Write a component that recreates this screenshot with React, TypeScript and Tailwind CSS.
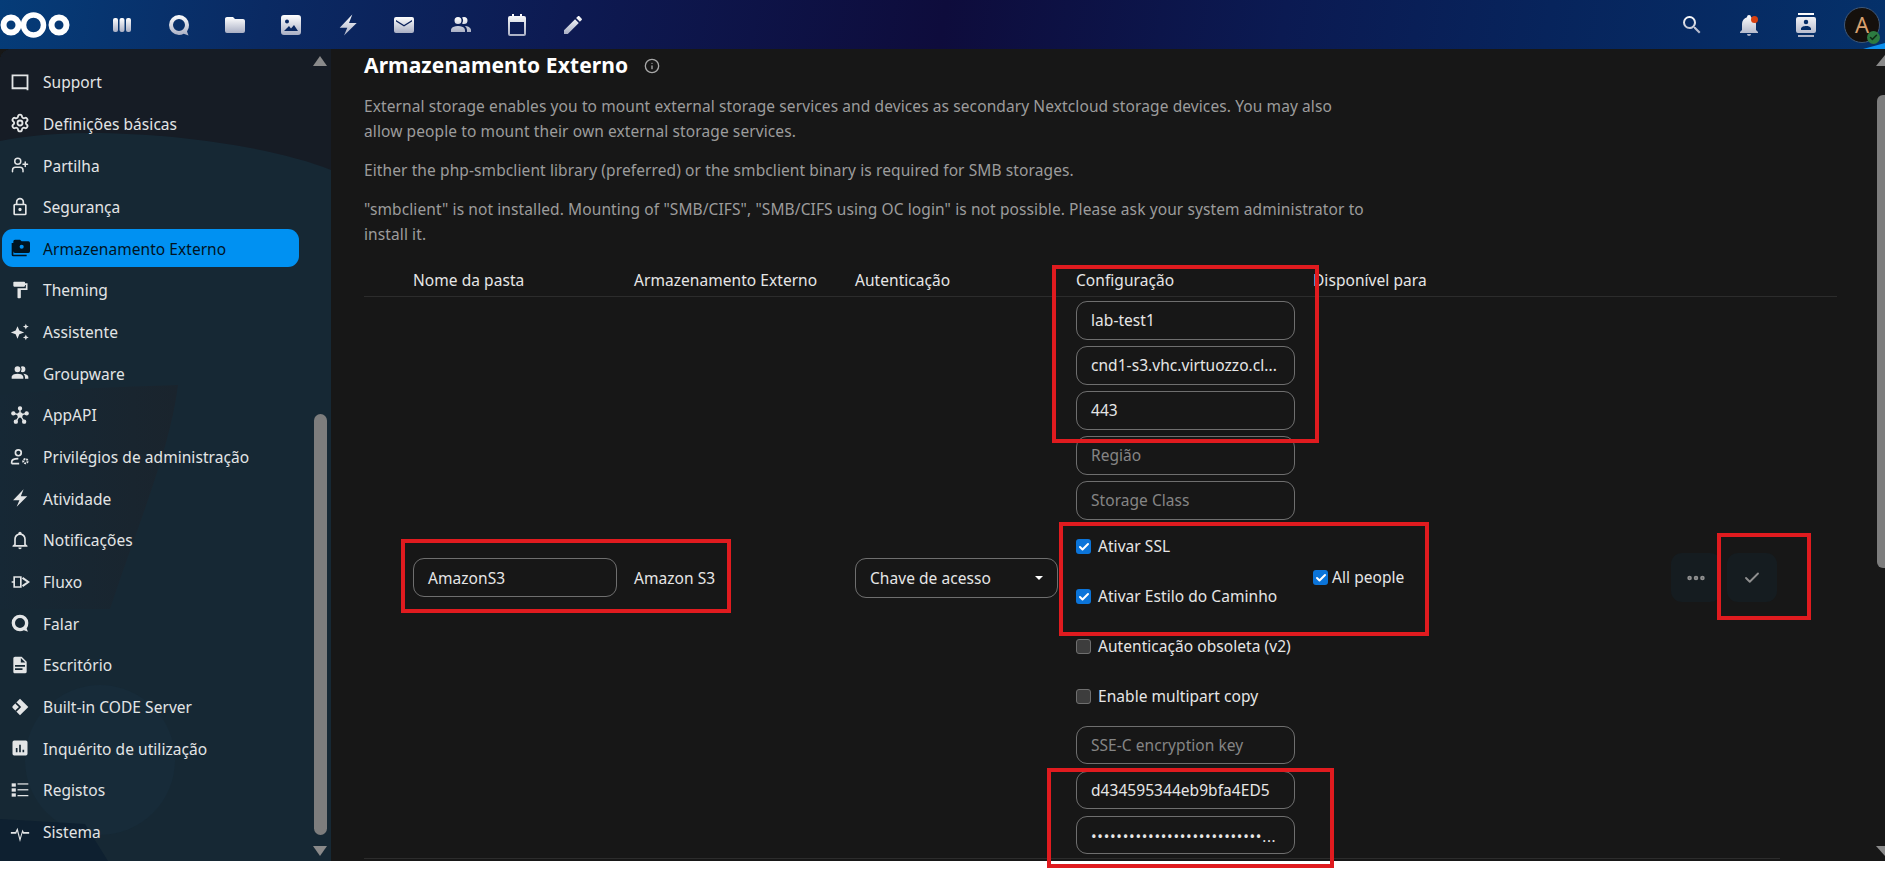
import { Ellipsis, Check, Info, Settings, UserPlus } from 'lucide-react'
import type { ReactNode } from 'react'

const font = 'font-["Noto_Sans","Open_Sans",sans-serif]'

function Mdi({ d, className = 'w-5 h-5', fill = 'currentColor' }: { d: string; className?: string; fill?: string }) {
  return (
    <svg viewBox="0 0 24 24" className={className} fill={fill}>
      <path d={d} />
    </svg>
  )
}

const paths = {
  folder: 'M10,4H4C2.89,4 2,4.89 2,6V18A2,2 0 0,0 4,20H20A2,2 0 0,0 22,18V8C22,6.89 21.1,6 20,6H12L10,4Z',
  bolt: 'M16.3 1.5L3.7 14.7H11.3L8 22.5L20.7 10H13Z',
  people:
    'M16 17V19H2V17S2 13 9 13 16 17 16 17M12.5 7.5A3.5 3.5 0 1 0 9 11A3.5 3.5 0 0 0 12.5 7.5M15.94 13A5.32 5.32 0 0 1 18 17V19H22V17S22 13.37 15.94 13M15 4A3.39 3.39 0 0 0 13.07 4.59A5 5 0 0 1 13.07 10.41A3.39 3.39 0 0 0 15 11A3.5 3.5 0 0 0 15 4Z',
  pencil:
    'M20.71,7.04C21.1,6.65 21.1,6 20.71,5.63L18.37,3.29C18,2.9 17.35,2.9 16.96,3.29L15.12,5.12L18.87,8.87M3,17.25V21H6.75L17.81,9.93L14.06,6.18L3,17.25Z',
  search:
    'M9.5,3A6.5,6.5 0 0,1 16,9.5C16,11.11 15.41,12.59 14.44,13.73L14.71,14H15.5L20.5,19L19,20.5L14,15.5V14.71L13.73,14.44C12.59,15.41 11.11,16 9.5,16A6.5,6.5 0 0,1 3,9.5A6.5,6.5 0 0,1 9.5,3M9.5,5C7,5 5,7 5,9.5C5,12 7,14 9.5,14C12,14 14,12 14,9.5C14,7 12,5 9.5,5Z',
  bell: 'M21,19V20H3V19L5,17V11C5,7.9 7.03,5.17 10,4.29C10,4.19 10,4.1 10,4A2,2 0 0,1 12,2A2,2 0 0,1 14,4C14,4.1 14,4.19 14,4.29C16.97,5.17 19,7.9 19,11V17L21,19M14,21A2,2 0 0,1 12,23A2,2 0 0,1 10,21',
  card: 'M20,0H4V2H20V0M4,24H20V22H4V24M20,4H4A2,2 0 0,0 2,6V18A2,2 0 0,0 4,20H20A2,2 0 0,0 22,18V6A2,2 0 0,0 20,4M12,6.75A2.25,2.25 0 0,1 14.25,9A2.25,2.25 0 0,1 12,11.25A2.25,2.25 0 0,1 9.75,9A2.25,2.25 0 0,1 12,6.75M17,17H7V15.5C7,13.83 10.33,13 12,13C13.67,13 17,13.83 17,15.5V17Z',
  roller: 'M18,4V3A1,1 0 0,0 17,2H5A1,1 0 0,0 4,3V7A1,1 0 0,0 5,8H17A1,1 0 0,0 18,7V6H19V10H9V21A1,1 0 0,0 10,22H12A1,1 0 0,0 13,21V12H21V4H18Z',
  bellOutline:
    'M10 21H14C14 22.1 13.1 23 12 23S10 22.1 10 21M21 19V20H3V19L5 17V11C5 7.9 7 5.2 10 4.3V4C10 2.9 10.9 2 12 2S14 2.9 14 4V4.3C17 5.2 19 7.9 19 11V17L21 19M17 11C17 8.2 14.8 6 12 6S7 8.2 7 11V18H17V11Z',
  doc: 'M13,9H18.5L13,3.5V9M6,2H14L20,8V20A2,2 0 0,1 18,22H6C4.89,22 4,21.1 4,20V4C4,2.89 4.89,2 6,2M15,18V16H6V18H15M18,14V12H6V14H18Z',
  lock: 'M12,17A2,2 0 0,0 14,15A2,2 0 0,0 12,13A2,2 0 0,0 10,15A2,2 0 0,0 12,17M18,8A2,2 0 0,1 20,10V20A2,2 0 0,1 18,22H6A2,2 0 0,1 4,20V10C4,8.89 4.9,8 6,8H7V6A5,5 0 0,1 12,1A5,5 0 0,1 17,6V8H18M12,3A3,3 0 0,0 9,6V8H15V6A3,3 0 0,0 12,3M6,10V20H18V10H6Z',
  image:
    'M5,2H19A3,3 0 0,1 22,5V19A3,3 0 0,1 19,22H5A3,3 0 0,1 2,19V5A3,3 0 0,1 5,2M8,6.5A2,2 0 0,0 6,8.5A2,2 0 0,0 8,10.5A2,2 0 0,0 10,8.5A2,2 0 0,0 8,6.5M5,18H19L15,12L12,15.5L10,13L5,18Z',
  mail: 'M4,4H20A2,2 0 0,1 22,6V18A2,2 0 0,1 20,20H4A2,2 0 0,1 2,18V6A2,2 0 0,1 4,4M4,7V8.5L12,13.5L20,8.5V7L12,12L4,7Z',
  calendar:
    'M7,1H9V3H15V1H17V3H19A2,2 0 0,1 21,5V21A2,2 0 0,1 19,23H5A2,2 0 0,1 3,21V5A2,2 0 0,1 5,3H7V1M5,9V21H19V9H5Z',
  talk: 'M12,2A10,10 0 0,0 2,12A10,10 0 0,0 12,22C13.7,22 15.3,21.6 16.7,20.8L21.5,22.5L20,18.5A10,10 0 0,0 22,12A10,10 0 0,0 12,2M12,6A6,6 0 0,1 18,12A6,6 0 0,1 12,18A6,6 0 0,1 6,12A6,6 0 0,1 12,6Z',
  pulse: 'M1,12H6.5L9,7L12,19L15,9L16.5,12H23V14H15.5L15,13L12,24L8.5,11L7.5,14H1Z',
  bars: 'M5,3H19A2,2 0 0,1 21,5V19A2,2 0 0,1 19,21H5A2,2 0 0,1 3,19V5A2,2 0 0,1 5,3M7,12V17H9V12H7M11,8V17H13V8H11M15,14V17H17V14H15Z',
  storage:
    'M4,6H2V20A2,2 0 0,0 4,22H20V20H4V6M22,4H14L12,2H6A2,2 0 0,0 4,4V16A2,2 0 0,0 6,18H22A2,2 0 0,0 24,16V6A2,2 0 0,0 22,4M14,8A2.5,2.5 0 0,1 16.5,10.5A2.5,2.5 0 0,1 14,13A2.5,2.5 0 0,1 11.5,10.5A2.5,2.5 0 0,1 14,8Z',
}

// Header icons fade from white to a cool grey
function NavIcon({ d }: { d: string }) {
  return (
    <div className="w-[56.4px] flex justify-center">
      <Mdi d={d} className="w-6 h-6" fill="url(#navFade)" />
    </div>
  )
}

function Logo() {
  return (
    <svg viewBox="0 0 70 44" className="w-[70px] h-11" fill="none" stroke="#fff">
      <circle cx="11" cy="22" r="7.5" strokeWidth="6" />
      <circle cx="33.5" cy="22" r="10" strokeWidth="5.5" />
      <circle cx="59" cy="22" r="7.5" strokeWidth="6" />
    </svg>
  )
}

function DashboardIcon() {
  return (
    <svg viewBox="0 0 24 24" className="w-6 h-6" fill="url(#navFade)">
      <rect x="3" y="5" width="5" height="14" rx="2" />
      <rect x="9.5" y="5" width="5" height="14" rx="2" />
      <rect x="16" y="5" width="5" height="14" rx="2" />
    </svg>
  )
}

function Header() {
  return (
    <header className="relative h-[49px] flex items-center justify-between shrink-0 bg-[linear-gradient(100deg,#053c78_0%,#0a2a63_14%,#0d1a52_30%,#0e0c3c_50%,#0b1a52_68%,#07245c_82%,#05316a_100%)]">
      <svg className="absolute w-0 h-0">
        <defs>
          <linearGradient id="navFade" x1="0" y1="0" x2="0" y2="1">
            <stop offset="0" stopColor="#ffffff" />
            <stop offset="1" stopColor="#a9afc4" />
          </linearGradient>
        </defs>
      </svg>
      <div className="flex items-center">
        <Logo />
        <div className="ml-[24px] flex items-center">
          <div className="w-[56.4px] flex justify-center">
            <DashboardIcon />
          </div>
          <NavIcon d={paths.talk} />
          <NavIcon d={paths.folder} />
          <NavIcon d={paths.image} />
          <NavIcon d={paths.bolt} />
          <NavIcon d={paths.mail} />
          <NavIcon d={paths.people} />
          <NavIcon d={paths.calendar} />
          <NavIcon d={paths.pencil} />
        </div>
      </div>
      <div className="flex items-center gap-[33px] pr-[5px]">
        <Mdi d={paths.search} className="w-6 h-6" fill="url(#navFade)" />
        <div className="relative">
          <Mdi d={paths.bell} className="w-6 h-6" fill="url(#navFade)" />
          <span className="absolute top-[3px] right-[3px] w-[7px] h-[7px] rounded-full bg-[#d8400f]" />
        </div>
        <Mdi d={paths.card} className="w-6 h-6" fill="url(#navFade)" />
        <div className="relative -ml-[7px] w-9 h-9 rounded-full bg-[#15100c] border border-[#3f5878] flex items-center justify-center text-[22px] text-[#d9a06f]">
          A
          <span className="absolute -right-[1px] -bottom-[2px] w-[13px] h-[13px] rounded-full bg-[#2d7b41] flex items-center justify-center">
            <Check className="w-[9px] h-[9px] text-[#0f2a16]" strokeWidth={4} />
          </span>
        </div>
      </div>
      {/* bright corner of the wallpaper */}
      <span className="absolute right-0 bottom-0 w-[22px] h-[6px] bg-[#0c90ee] [clip-path:polygon(100%_0,100%_100%,0_100%)]" />
    </header>
  )
}

const Stroke = ({ children }: { children: ReactNode }) => (
  <svg viewBox="0 0 24 24" className="w-5 h-5" fill="none" stroke="currentColor" strokeWidth="2">
    {children}
  </svg>
)

const navItems: { label: string; icon: ReactNode; active?: boolean }[] = [
  {
    label: 'Support',
    icon: (
      <Stroke>
        <path d="M3 4h18v15.5h-18zM21 18v4" strokeWidth="2.2" />
      </Stroke>
    ),
  },
  { label: 'Definições básicas', icon: <Settings className="w-5 h-5" strokeWidth={2.2} /> },
  { label: 'Partilha', icon: <UserPlus className="w-[18px] h-[18px]" strokeWidth={2} /> },
  { label: 'Segurança', icon: <Mdi d={paths.lock} /> },
  { label: 'Armazenamento Externo', icon: <Mdi d={paths.storage} />, active: true },
  { label: 'Theming', icon: <Mdi d={paths.roller} /> },
  {
    label: 'Assistente',
    icon: (
      <svg viewBox="0 0 24 24" className="w-5 h-5" fill="currentColor">
        <path d="M9 5l2.2 5.3L17 12.5l-5.8 2.2L9 20l-2.2-5.3L1 12.5l5.8-2.2zM19 2l1 2.5 2.5 1-2.5 1-1 2.5-1-2.5-2.5-1 2.5-1zM19 15l1 2.5 2.5 1-2.5 1-1 2.5-1-2.5-2.5-1 2.5-1z" />
      </svg>
    ),
  },
  { label: 'Groupware', icon: <Mdi d={paths.people} /> },
  {
    label: 'AppAPI',
    icon: (
      <svg viewBox="0 0 24 24" className="w-5 h-5" fill="currentColor" stroke="currentColor" strokeWidth="1.6">
        <circle cx="12" cy="12" r="2.5" />
        <circle cx="12" cy="4" r="1.8" />
        <circle cx="4" cy="10" r="1.8" />
        <circle cx="20" cy="10" r="1.8" />
        <circle cx="7" cy="20" r="1.8" />
        <circle cx="17" cy="20" r="1.8" />
        <path d="M12 4v8M4 10l8 2M20 10l-8 2M7 20l5-8M17 20l-5-8" />
      </svg>
    ),
  },
  {
    label: 'Privilégios de administração',
    icon: (
      <svg viewBox="0 0 24 24" className="w-5 h-5" fill="none" stroke="currentColor" strokeWidth="2">
        <circle cx="10" cy="7" r="3.5" />
        <path d="M2 20v-2c0-2.5 3-4 8-4M2 20h9" />
        <circle cx="18.5" cy="17" r="2.6" strokeWidth="2.4" strokeDasharray="2 1" />
      </svg>
    ),
  },
  { label: 'Atividade', icon: <Mdi d={paths.bolt} /> },
  { label: 'Notificações', icon: <Mdi d={paths.bellOutline} /> },
  {
    label: 'Fluxo',
    icon: (
      <svg viewBox="0 0 24 24" className="w-5 h-5" fill="none" stroke="currentColor" strokeWidth="2">
        <path d="M13 6H5v12h8zM2 12h3" />
        <path d="M15 7l7 5-7 5" strokeWidth="2.4" />
      </svg>
    ),
  },
  { label: 'Falar', icon: <Mdi d={paths.talk} /> },
  { label: 'Escritório', icon: <Mdi d={paths.doc} /> },
  {
    label: 'Built-in CODE Server',
    icon: (
      <svg viewBox="0 0 24 24" className="w-5 h-5">
        <path d="M12 2l10 10-10 10L3 13V11z" fill="currentColor" />
        <path d="M7 7l5 5-5 5" fill="none" stroke="#14232e" strokeWidth="2" />
      </svg>
    ),
  },
  { label: 'Inquérito de utilização', icon: <Mdi d={paths.bars} /> },
  {
    label: 'Registos',
    icon: (
      <svg viewBox="0 0 24 24" className="w-5 h-5" fill="currentColor">
        <rect x="2" y="4" width="5" height="4" />
        <rect x="2" y="10" width="5" height="4" />
        <rect x="2" y="16" width="5" height="4" />
        <rect x="9" y="4" width="13" height="1.5" />
        <rect x="9" y="11" width="13" height="1.5" />
        <rect x="9" y="18" width="13" height="1.5" />
      </svg>
    ),
  },
  { label: 'Sistema', icon: <Mdi d={paths.pulse} /> },
]

function SidebarBackdrop() {
  return (
    <svg viewBox="0 0 331 812" preserveAspectRatio="none" className="absolute inset-0 w-full h-full">
      <defs>
        <linearGradient id="wedge" x1="0" y1="0" x2="1" y2="0">
          <stop offset="0" stopColor="#162835" />
          <stop offset="1" stopColor="#1a242d" />
        </linearGradient>
      </defs>
      <rect width="331" height="812" fill="#162834" />
      <path d="M0 0H331V121C280 100 180 84 90 84C50 84 20 88 0 92Z" fill="#161c25" />
      <path d="M0 346C50 340 120 338 178 336C170 400 140 470 110 560H0Z" fill="url(#wedge)" />
      <circle cx="100" cy="711" r="75" fill="#172b39" />
      <path d="M0 770L85 775L108 812H0Z" fill="#0e2030" />
    </svg>
  )
}

function Sidebar() {
  return (
    <aside className="relative w-[331px] shrink-0 rounded-tl-xl overflow-hidden">
      <SidebarBackdrop />
      <nav className="relative pt-[12px] flex flex-col w-[297px] ml-[2px] text-[15.5px] tracking-[0.05px]">
        {navItems.map((item) => (
          <div key={item.label} className="h-[41.67px] flex items-center">
            <div
              className={
                item.active
                  ? 'w-full h-[38px] pl-[8px] flex items-center gap-[13px] rounded-[11px] bg-[#0091f2] text-[#00131f]'
                  : 'w-full h-[38px] pl-[8px] flex items-center gap-[13px] text-[#e3e5e6]'
              }
            >
              <span className="w-5 h-5 flex items-center justify-center shrink-0">{item.icon}</span>
              <span className="pt-[2px]">{item.label}</span>
            </div>
          </div>
        ))}
      </nav>
      {/* scrollbar */}
      <div className="absolute right-[4px] top-0 bottom-0 w-[14px] flex flex-col items-center">
        <div className="mt-[7px] w-0 h-0 border-x-[7px] border-x-transparent border-b-[10px] border-b-[#8a8a8a]" />
        <div className="mt-[348px] w-[13px] h-[421px] rounded-full bg-[#7d7d7d]" />
        <div className="mt-[11px] w-0 h-0 border-x-[7px] border-x-transparent border-t-[10px] border-t-[#8a8a8a]" />
      </div>
    </aside>
  )
}

function Field({ value, placeholder, dots, short }: { value?: string; placeholder?: string; dots?: boolean; short?: boolean }) {
  return (
    <div
      className={
        short
          ? 'h-[38px] w-[219px] pt-[2px] rounded-[11px] border border-[#6f6f6f] px-[14px] flex items-center overflow-hidden whitespace-nowrap'
          : 'h-[39px] w-[219px] rounded-[11px] border border-[#6f6f6f] px-[14px] flex items-center overflow-hidden whitespace-nowrap'
      }
    >
      {placeholder ? <span className="text-[#858585]">{placeholder}</span> : null}
      {value ? <span className="text-[#e6e6e6]">{value}</span> : null}
      {dots ? (
        <span className="text-[#e6e6e6] text-[15px] tracking-[0.7px]">•••••••••••••••••••••••••••...</span>
      ) : null}
    </div>
  )
}

function Box({ checked, label, tight }: { checked?: boolean; label: string; tight?: boolean }) {
  return (
    <div
      className={
        tight
          ? 'h-[21px] flex items-center gap-[4px] text-[#e6e6e6] whitespace-nowrap'
          : 'h-[21px] flex items-center gap-[7px] text-[#e6e6e6] whitespace-nowrap'
      }
    >
      {checked ? (
        <span className="w-[15px] h-[15px] rounded-[3px] bg-[#0b74d9] flex items-center justify-center">
          <Check className="w-3 h-3 text-white" strokeWidth={4} />
        </span>
      ) : (
        <span className="w-[15px] h-[15px] rounded-[3px] bg-[#3d3d3d] border border-[#6f6f6f]" />
      )}
      <span>{label}</span>
    </div>
  )
}

function IconButton({ children }: { children: ReactNode }) {
  return (
    <div className="w-[50px] h-[49px] rounded-[11px] bg-[#151c20] flex items-center justify-center text-[#8f8f8f]">
      {children}
    </div>
  )
}

function Content() {
  return (
    <main className="relative flex-1 bg-[#171717] overflow-hidden pl-[33px] text-[15.5px] tracking-[0.05px]">
      <div className="h-[34px] flex items-center gap-[16px]">
        <h2 className="text-[21px] font-bold text-white tracking-[0.1px]">Armazenamento Externo</h2>
        <Info className="w-4 h-4 text-[#a8a8a8]" />
      </div>
      <div className="mt-[11px] w-[1010px] leading-[25px] tracking-[0.1px] text-[#9c9c9c]">
        <p>
          External storage enables you to mount external storage services and devices as secondary Nextcloud storage
          devices. You may also allow people to mount their own external storage services.
        </p>
        <p className="mt-[14px]">Either the php-smbclient library (preferred) or the smbclient binary is required for SMB storages.</p>
        <p className="mt-[14px]">
          "smbclient" is not installed. Mounting of "SMB/CIFS", "SMB/CIFS using OC login" is not possible. Please ask your
          system administrator to install it.
        </p>
      </div>

      <div className="mt-[22px] w-[1473px] h-[28px] border-b border-[#2c2c2c] flex items-start text-[#e6e6e6] pl-[49px]">
        <span className="w-[221px]">Nome da pasta</span>
        <span className="w-[221px]">Armazenamento Externo</span>
        <span className="w-[221px]">Autenticação</span>
        <span className="w-[237px]">Configuração</span>
        <span>Disponível para</span>
      </div>

      <div className="w-[1416px] h-[562px] border-b border-[#2c2c2c] flex items-center pl-[49px] pr-[3px] text-[#e6e6e6]">
        <div className="h-[39px] w-[204px] pt-[2px] rounded-[11px] border border-[#6f6f6f] px-[14px] flex items-center">AmazonS3</div>
        <span className="ml-[17px] w-[221px] pt-[2px]">Amazon S3</span>
        <div className="h-[40px] w-[203px] rounded-[11px] border border-[#6f6f6f] px-[14px] flex items-center justify-between">
          <span className="pt-[2px]">Chave de acesso</span>
          <span className="w-0 h-0 border-x-[4.5px] border-x-transparent border-t-[4px] border-t-white" />
        </div>
        <div className="ml-[18px] w-[237px] flex flex-col">
          <div className="flex flex-col gap-[6px]">
            <Field value="lab-test1" />
            <Field value="cnd1-s3.vhc.virtuozzo.cl..." />
            <Field value="443" />
            <Field placeholder="Região" />
            <Field placeholder="Storage Class" />
          </div>
          <div className="mt-[16px] flex flex-col gap-[29px]">
            <Box checked label="Ativar SSL" />
            <Box checked label="Ativar Estilo do Caminho" />
            <Box label="Autenticação obsoleta (v2)" />
            <Box label="Enable multipart copy" />
          </div>
          <div className="mt-[19px] flex flex-col gap-[7px]">
            <Field short placeholder="SSE-C encryption key" />
            <Field short value="d434595344eb9bfa4ED5" />
            <Field short dots />
          </div>
        </div>
        <Box checked tight label="All people" />
        <div className="ml-auto flex gap-[6px]">
          <IconButton>
            <Ellipsis className="w-[22px] h-[22px]" strokeWidth={3} />
          </IconButton>
          <IconButton>
            <Check className="w-[18px] h-[18px]" strokeWidth={2.5} />
          </IconButton>
        </div>
      </div>

      {/* main scrollbar */}
      <div className="absolute right-0 top-0 bottom-0 w-[9px]">
        <div className="absolute right-0 top-[6px] w-0 h-0 border-l-[9px] border-l-transparent border-r-0 border-b-[11px] border-b-[#8a8a8a]" />
        <div className="absolute right-0 top-[46px] w-[8px] h-[473px] rounded-l-[6px] bg-[#7d7d7d]" />
        <div className="absolute right-0 bottom-[5px] w-0 h-0 border-l-[9px] border-l-transparent border-t-[10px] border-t-[#8a8a8a]" />
      </div>
    </main>
  )
}

// Red boxes someone drew over the screenshot
const marks = [
  'left-[1052px] top-[265px] w-[267px] h-[178px]',
  'left-[401px] top-[539px] w-[330px] h-[74px]',
  'left-[1059px] top-[522px] w-[370px] h-[114px]',
  'left-[1047px] top-[768px] w-[287px] h-[100px]',
  'left-[1717px] top-[533px] w-[94px] h-[87px]',
]

export default function App() {
  return (
    <div className={`relative w-[1885px] h-[869px] overflow-hidden bg-white ${font}`}>
      <div className="h-[861px] flex flex-col">
        <Header />
        <div className="flex-1 flex min-h-0 bg-[#171717]">
          <Sidebar />
          <Content />
        </div>
      </div>
      {marks.map((m) => (
        <div key={m} className={`absolute border-4 border-[#e01b1f] ${m}`} />
      ))}
    </div>
  )
}
